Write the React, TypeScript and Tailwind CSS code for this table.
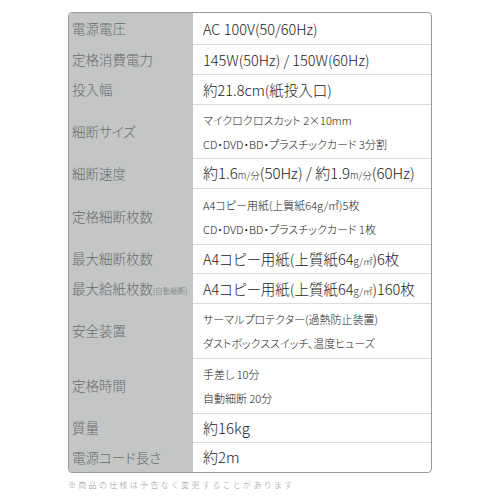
import React from "react";

const FONT = { fontFamily: '"Noto Sans CJK JP", "Noto Sans", sans-serif' } as const;

type Row = { label: React.ReactNode; value: React.ReactNode; h: string };

const Small = ({ children }: { children: React.ReactNode }) => (
  <span className="text-[9.5px]">{children}</span>
);

const rows: Row[] = [
  { label: "電源電圧", value: <span className="text-[14.5px]">AC 100V(50/60Hz)</span>, h: "h-[31px]" },
  { label: "定格消費電力", value: <span className="text-[14.5px]">145W(50Hz) / 150W(60Hz)</span>, h: "h-[30px]" },
  { label: "投入幅", value: <span className="text-[14.5px]">約21.8cm(紙投入口)</span>, h: "h-[30px]" },
  {
    label: "細断サイズ",
    value: (
      <div className="flex flex-col text-[11px] leading-[24px]">
        <span>マイクロクロスカット 2×10mm</span>
        <span>CD・DVD・BD・プラスチックカード 3分割</span>
      </div>
    ),
    h: "h-[54px]",
  },
  {
    label: "細断速度",
    value: (
      <span className="text-[15px]">
        約1.6<Small>m/分</Small>(50Hz) / 約1.9<Small>m/分</Small>(60Hz)
      </span>
    ),
    h: "h-[30px]",
  },
  {
    label: "定格細断枚数",
    value: (
      <div className="flex flex-col text-[11px] leading-[24px]">
        <span>A4コピー用紙(上質紙64g/㎡)5枚</span>
        <span>CD・DVD・BD・プラスチックカード 1枚</span>
      </div>
    ),
    h: "h-[56px]",
  },
  {
    label: "最大細断枚数",
    value: (
      <span className="text-[14.5px]">
        A4コピー用紙(上質紙64<Small>g/㎡</Small>)6枚
      </span>
    ),
    h: "h-[29px]",
  },
  {
    label: (
      <span>
        最大給紙枚数<span className="text-[7.5px]">(自動細断)</span>
      </span>
    ),
    value: (
      <span className="text-[14.5px]">
        A4コピー用紙(上質紙64<Small>g/㎡</Small>)160枚
      </span>
    ),
    h: "h-[30px]",
  },
  {
    label: "安全装置",
    value: (
      <div className="flex flex-col text-[11px] leading-[24px]">
        <span>サーマルプロテクター(過熱防止装置)</span>
        <span>ダストボックススイッチ、温度ヒューズ</span>
      </div>
    ),
    h: "h-[55px]",
  },
  {
    label: "定格時間",
    value: (
      <div className="flex flex-col text-[11px] leading-[24px]">
        <span>手差し 10分</span>
        <span>自動細断 20分</span>
      </div>
    ),
    h: "h-[55px]",
  },
  { label: "質量", value: <span className="text-[15px]">約16kg</span>, h: "h-[29px]" },
  { label: "電源コード長さ", value: <span className="text-[15px]">約2m</span>, h: "h-[30px]" },
];

export default function App() {
  return (
    <div className="w-[500px] h-[500px] bg-white pt-[12px] pl-[68px] font-light" style={FONT}>
      <div className="w-[364px] border border-[#9a9a9a] rounded-[4px] overflow-hidden flex flex-col [font-feature-settings:'palt']">
        {rows.map((r, i) => (
          <div key={i} className={`flex ${r.h}`}>
            <div className="w-[124px] shrink-0 bg-[#c4c6c6] text-[#6a6a6a] text-[13.5px] flex items-center pl-[3px] whitespace-nowrap">
              {r.label}
            </div>
            <div
              className={`flex-1 flex items-center pl-[10px] text-[#222] whitespace-nowrap ${
                i > 0 ? "border-t border-[#dcdcdc]" : ""
              }`}
            >
              {r.value}
            </div>
          </div>
        ))}
      </div>
      <p className="mt-[6px] text-[8px] leading-[12px] tracking-[2.3px] text-[#9a9a9a] whitespace-nowrap">
        ※商品の仕様は予告なく変更することがあります
      </p>
    </div>
  );
}
